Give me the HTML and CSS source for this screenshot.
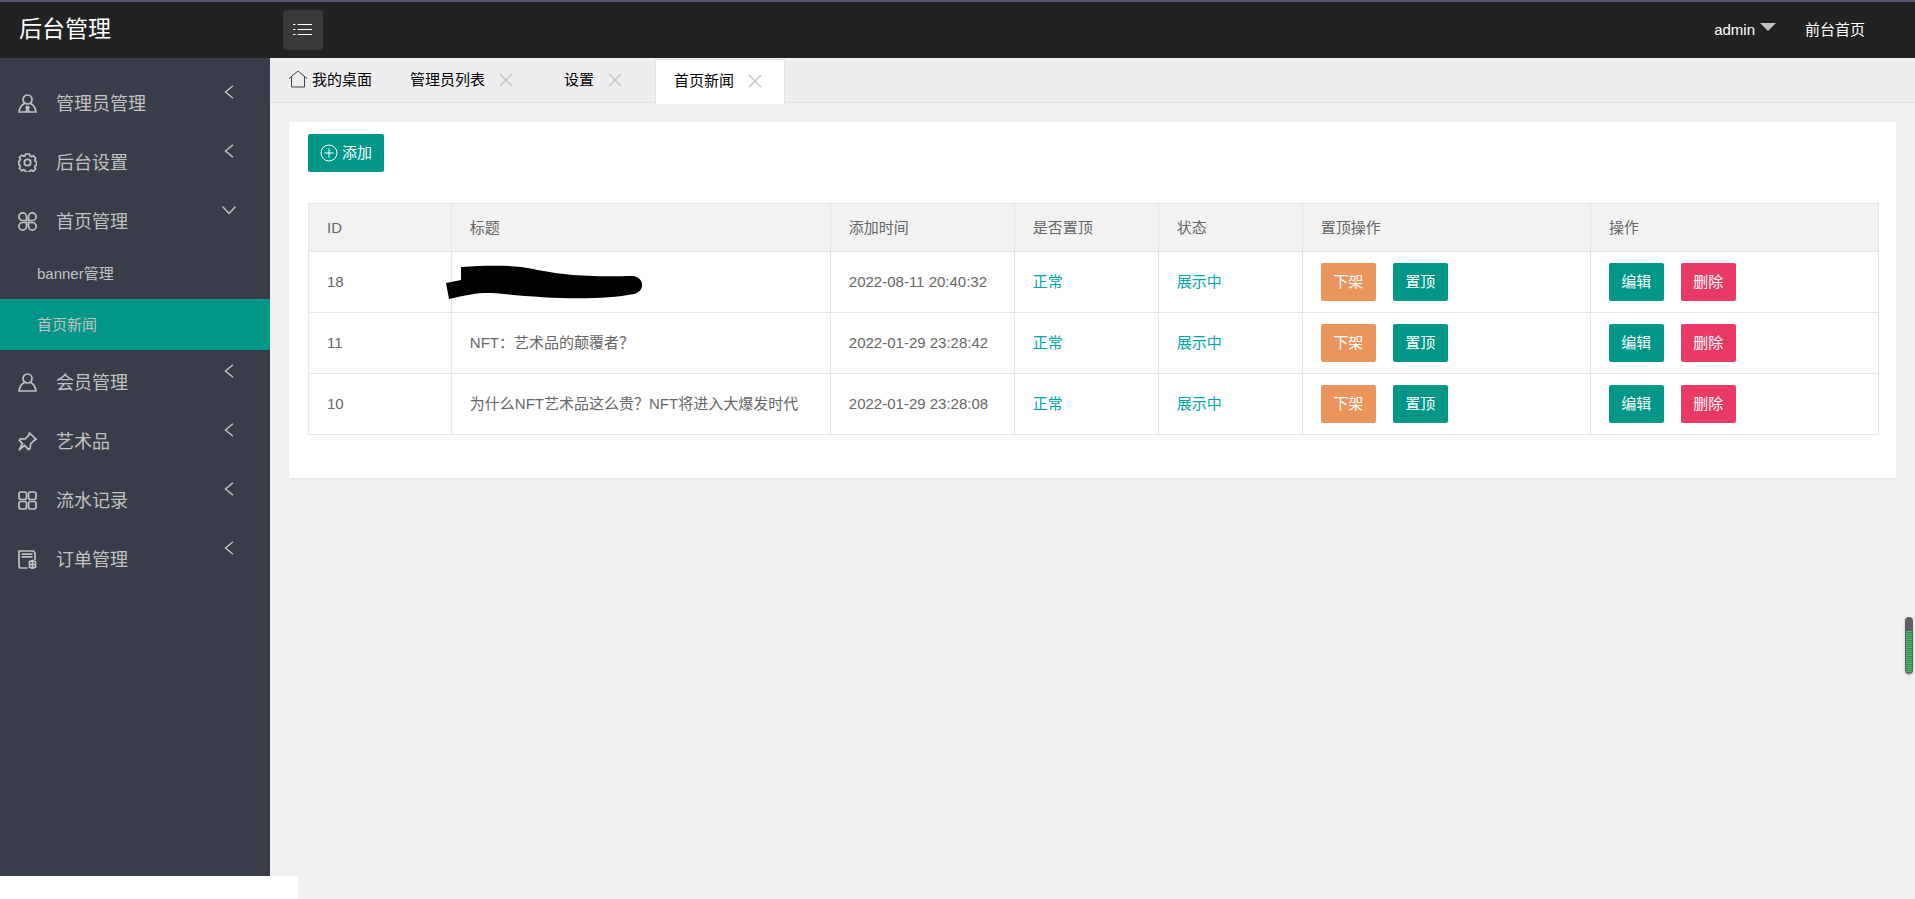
FILE: index.html
```html
<!DOCTYPE html>
<html lang="zh-CN">
<head>
<meta charset="utf-8">
<title>后台管理</title>
<link rel="stylesheet" href="styles.css">
</head>
<body>
<svg class="defs" width="0" height="0" aria-hidden="true">
  <symbol id="left" viewBox="0 0 14 14"><path d="M11 .7 3.500 7l7.500 6.300"/></symbol>
  <symbol id="down" viewBox="0 0 14 14"><path d="M.5 3.500 7 10.500l6.500-7"/></symbol>
  <symbol id="close" viewBox="0 0 14 14"><path d="M1 1l12 12M13 1 1 13"/></symbol>
</svg>
<header class="header">
  <h1 class="logo">后台管理</h1>
  <button class="toggle" type="button" aria-label="菜单">
    <svg width="20" height="14" viewBox="0 0 20 14"><path d="M4.500 1.500H19M4.500 6.500H19M4.500 11.500H19M0 1.500h2.500M0 6.500h2.500M0 11.500h2.500"/></svg>
  </button>
  <nav class="user-nav">
    <a class="user-link" href="#">admin<span class="caret"></span></a>
    <a class="user-link" href="#">前台首页</a>
  </nav>
</header>
<div class="body">
  <aside class="side">
    <nav class="menu">
      <a class="item" href="#"><svg class="icon" viewBox="0 0 19 19"><circle cx="9.500" cy="5.500" r="4.500"/><path d="M6.500 9.500C3.500 11 1.500 14 1 18h17c-.5-4-2.500-7-5.500-8.500M9.500 12l-1.500 1.500 1 1-1 3.500M9.500 12l1.500 1.500-1 1 1 3.500"/></svg><span>管理员管理</span><svg class="arrow"><use href="#left"/></svg></a>
      <a class="item" href="#"><svg class="icon" viewBox="0 0 19 19"><circle cx="9.500" cy="9.500" r="3.200"/><path d="M7.600 1h3.800l.7 2 1.400.6 1.900-.9 2.300 2.400-1 1.900.6 1.300 1.200.5v3.400l-1.300.6-.5 1.300.9 1.900-2.400 2.300-1.800-1-1.400.6-.6 1.300H7.600L7 17.300l-1.400-.6-1.800 1-2.400-2.300.9-1.900-.5-1.300-1-.6V8.200l1-.5.6-1.300-1-1.900 2.400-2.300 1.900.9L7 3z"/></svg><span>后台设置</span><svg class="arrow"><use href="#left"/></svg></a>
      <a class="item" href="#"><svg class="icon" viewBox="0 0 19 19"><path d="M8.500 8.500H4.700a3.800 3.800 0 1 1 3.800-3.800zM10.500 8.500h3.800a3.800 3.800 0 1 0-3.800-3.800zM8.500 10.500H4.700a3.800 3.800 0 1 0 3.800 3.800zM10.500 10.500h3.800a3.800 3.800 0 1 1-3.800 3.800z"/></svg><span>首页管理</span><svg class="arrow"><use href="#down"/></svg></a>
      <a class="sub" href="#">banner管理</a>
      <a class="sub sub-active" href="#">首页新闻</a>
      <a class="item" href="#"><svg class="icon" viewBox="0 0 19 19"><circle cx="9.500" cy="5.500" r="4.500"/><path d="M6.500 9.500C3.500 11 1.500 14 1 18h17c-.5-4-2.500-7-5.500-8.500"/></svg><span>会员管理</span><svg class="arrow"><use href="#left"/></svg></a>
      <a class="item" href="#"><svg class="icon" viewBox="0 0 19 19"><path d="M11.500 1l6.700 6.500-2 .8-3.600 3.700-.4 4.300-1.500 1.300-4.200-4.300L1 18.200l3.500-6.600L1.300 8.200l1.200-1.400 4.700.2 3.500-3.700z"/></svg><span>艺术品</span><svg class="arrow"><use href="#left"/></svg></a>
      <a class="item" href="#"><svg class="icon" viewBox="0 0 19 19"><rect x="1" y="1" width="7.500" height="7.500" rx="2"/><rect x="10.500" y="1" width="7.500" height="7.500" rx="2"/><rect x="1" y="10.500" width="7.500" height="7.500" rx="2"/><rect x="10.500" y="10.500" width="7.500" height="7.500" rx="2"/></svg><span>流水记录</span><svg class="arrow"><use href="#left"/></svg></a>
      <a class="item" href="#"><svg class="icon" viewBox="0 0 19 19"><path d="M9.500 18H3a2 2 0 0 1-2-2V1h14.500l1.500 2v7M3.500 4.200h11M3.500 6.800h11M10.500 12l4-1.500L18 12M11.500 12v5.200l3 1.200 3-1.200V12M14.500 11v7M12 14.500h5"/></svg><span>订单管理</span><svg class="arrow"><use href="#left"/></svg></a>
    </nav>
  </aside>
  <main class="main">
    <nav class="tabs">
      <a class="tab tab-home" href="#"><svg class="home" width="20" height="18" viewBox="0 0 20 18"><path d="M1 8.500 10 1l9 7.500M3.500 7v10h13V7"/></svg>我的桌面</a>
      <div class="tab"><a href="#">管理员列表</a><button class="close" type="button" aria-label="关闭"><svg width="14" height="14"><use href="#close"/></svg></button></div>
      <div class="tab"><a href="#">设置</a><button class="close" type="button" aria-label="关闭"><svg width="14" height="14"><use href="#close"/></svg></button></div>
      <div class="tab tab-active"><a href="#">首页新闻</a><button class="close" type="button" aria-label="关闭"><svg width="14" height="14"><use href="#close"/></svg></button></div>
    </nav>
    <section class="card">
      <button class="btn btn-add" type="button"><svg width="18" height="18" viewBox="0 0 18 18"><circle cx="9" cy="9" r="8"/><path d="M9 4.500v9M4.500 9h9"/></svg>添加</button>
      <table class="table">
        <colgroup><col class="c-id"><col class="c-title"><col class="c-time"><col class="c-state"><col class="c-state"><col class="c-act"><col class="c-act"></colgroup>
        <thead><tr><th>ID</th><th>标题</th><th>添加时间</th><th>是否置顶</th><th>状态</th><th>置顶操作</th><th>操作</th></tr></thead>
        <tbody>
          <tr><td>18</td><td class="redacted"><svg class="scribble" width="198" height="36" viewBox="0 0 198 36"><path d="M16 3C45 1 70 1 88 5c30 6 50 8 100 7 12 2 12 15 1 18-36 7-90 4-130 0-22-2-28-1-55 5L1 19l15-3z"/></svg></td><td>2022-08-11 20:40:32</td><td class="ok">正常</td><td class="ok">展示中</td>
            <td><div class="actions"><button class="btn btn-warn" type="button">下架</button><button class="btn" type="button">置顶</button></div></td>
            <td><div class="actions"><button class="btn" type="button">编辑</button><button class="btn btn-danger" type="button">删除</button></div></td></tr>
          <tr><td>11</td><td>NFT：艺术品的颠覆者？</td><td>2022-01-29 23:28:42</td><td class="ok">正常</td><td class="ok">展示中</td>
            <td><div class="actions"><button class="btn btn-warn" type="button">下架</button><button class="btn" type="button">置顶</button></div></td>
            <td><div class="actions"><button class="btn" type="button">编辑</button><button class="btn btn-danger" type="button">删除</button></div></td></tr>
          <tr><td>10</td><td>为什么NFT艺术品这么贵？NFT将进入大爆发时代</td><td>2022-01-29 23:28:08</td><td class="ok">正常</td><td class="ok">展示中</td>
            <td><div class="actions"><button class="btn btn-warn" type="button">下架</button><button class="btn" type="button">置顶</button></div></td>
            <td><div class="actions"><button class="btn" type="button">编辑</button><button class="btn btn-danger" type="button">删除</button></div></td></tr>
        </tbody>
      </table>
    </section>
  </main>
</div>
<div class="footer-strip"></div>
<div class="meter"><div class="meter-fill"></div></div>
</body>
</html>
```
FILE: styles.css
```css
* { box-sizing: border-box; }

body {
  margin: 0;
  height: 100vh;
  display: flex;
  flex-direction: column;
  background: #f0f0f0;
  color: #666;
  font: 15px/24px "Liberation Sans", "Noto Sans CJK SC", sans-serif;
}

a { color: inherit; text-decoration: none; }

button {
  font: inherit;
  border: 0;
  padding: 0;
  cursor: pointer;
}

svg { fill: none; stroke: currentColor; flex: none; }

.defs { position: absolute; }

.header {
  display: flex;
  align-items: center;
  height: 58px;
  flex: none;
  padding-right: 50px;
  border-top: 2px solid #56547a;
  background: #222;
  color: #fff;
}

.logo {
  width: 283px;
  margin: 0;
  padding: 0 0 2px 19px;
  font-size: 23px;
  font-weight: 400;
  line-height: 54px;
}

.toggle {
  display: flex;
  align-items: center;
  justify-content: center;
  width: 40px;
  height: 40px;
  border-radius: 4px;
  background: #393939;
  color: #fff;
}

.user-nav { display: flex; gap: 29px; margin-left: auto; }
.user-link { display: flex; }

.caret {
  height: 8px;
  margin: 5px 0 0 5px;
  border: 8px solid transparent;
  border-top-color: #c2c2c2;
  border-bottom: 0;
}

.body { display: flex; flex: 1; min-height: 0; }

.side {
  width: 270px;
  flex: none;
  padding-top: 13px;
  background: #393d49;
  color: #c2c2c2;
}

.menu { display: flex; flex-direction: column; }

.item {
  display: flex;
  align-items: center;
  gap: 19px;
  padding: 20px 34px 12px 18px;
  font-size: 18px;
  line-height: 27px;
}

.icon { width: 19px; height: 19px; margin-bottom: 2px; stroke-width: 1.700; }

.arrow {
  width: 14px;
  height: 14px;
  margin: -6px 0 0 auto;
  align-self: flex-start;
  stroke-width: 1.500;
}

.sub { padding: 0 37px; line-height: 51px; }
.sub-active { background: #009688; }

.main { flex: 1; min-width: 0; }

.tabs {
  display: flex;
  gap: 11px;
  height: 45px;
  border-bottom: 1px solid #e4e4e6;
  background: #eeeef0;
  color: #000;
}

.tab {
  display: flex;
  align-items: center;
  height: 44px;
  padding: 0 22px 0 18px;
}

.tab-home { gap: 4px; padding-right: 9px; }
.home { color: #444; margin-bottom: 2px; }

.tab-active {
  height: 45px;
  margin-top: 1px;
  padding-bottom: 3px;
  border: 1px solid #e4e4e6;
  border-width: 1px 1px 0;
  border-radius: 2px 2px 0 0;
  background: #fff;
}

.close {
  display: flex;
  margin-left: 14px;
  background: none;
  color: #c2c2c2;
  stroke-width: 1.400;
}

.card {
  margin: 19px;
  padding: 12px 17px 43px 19px;
  border-radius: 2px;
  background: #fff;
  box-shadow: 0 1px 2px rgba(0, 0, 0, .06);
}

.btn {
  min-width: 55px;
  height: 38px;
  padding: 0 12px;
  border-radius: 2px;
  background: #009688;
  color: #fff;
}

.btn-add { display: flex; align-items: center; gap: 4px; }
.btn-warn { background: #eb955d; }
.btn-danger { background: #e93a65; }

.table {
  width: 100%;
  margin-top: 31px;
  border-collapse: collapse;
  table-layout: fixed;
}

.c-id { width: 9.100%; }
.c-title { width: 24.140%; }
.c-time { width: 11.720%; }
.c-state { width: 9.170%; }
.c-act { width: 18.350%; }

.table th, .table td {
  height: 61px;
  padding: 0 18px;
  border: 1px solid #e6e6e6;
  font-weight: 400;
  text-align: left;
  white-space: nowrap;
}

.table th { height: 48px; background: #f2f2f2; }
.table .ok { color: #00a5a8; }

.actions { display: flex; gap: 17px; }

.redacted { position: relative; }

.scribble {
  position: absolute;
  top: 12px;
  left: -7px;
  fill: #000;
  stroke: none;
}

.footer-strip { width: 298px; height: 23px; flex: none; background: #fff; }

.meter {
  position: fixed;
  top: 617px;
  right: 2px;
  width: 8px;
  height: 57px;
  padding: 14px 1px 1px;
  border-radius: 4px;
  background: #606060;
  box-shadow: 0 1px 3px rgba(0, 0, 0, .2);
}

.meter-fill {
  height: 100%;
  border-radius: 0 0 3px 3px;
  background: repeating-linear-gradient(#3cc76a 0 1px, #4d7a59 1px 2px);
}
```
